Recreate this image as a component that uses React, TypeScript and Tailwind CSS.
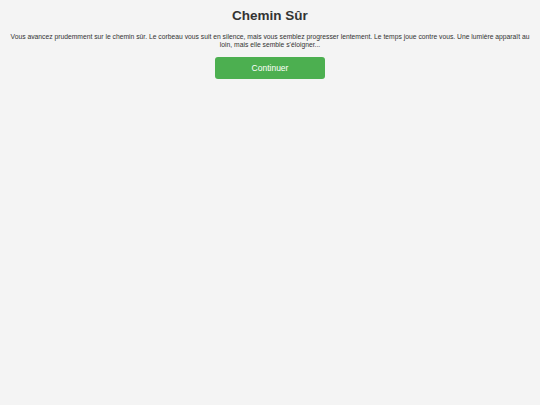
export default function App() {
  return (
    <div
      className="min-h-[405px] w-full bg-[#f4f4f4] px-[10px] pt-[8px] text-center text-[#333]"
      style={{ fontFamily: '"Liberation Sans", Arial, sans-serif' }}
    >
      <h1 className="text-[13.5px] font-bold leading-[16px]">Chemin Sûr</h1>
      <p className="mt-[9px] text-[6.75px] leading-[8px]">
        Vous avancez prudemment sur le chemin sûr. Le corbeau vous suit en silence, mais vous semblez progresser
        lentement. Le temps joue contre vous. Une lumière apparaît au loin, mais elle semble s'éloigner...
      </p>
      <button className="mt-[8px] h-[22px] w-[110px] rounded-[3px] bg-[#4caf50] text-[8.5px] text-white">
        Continuer
      </button>
    </div>
  );
}
